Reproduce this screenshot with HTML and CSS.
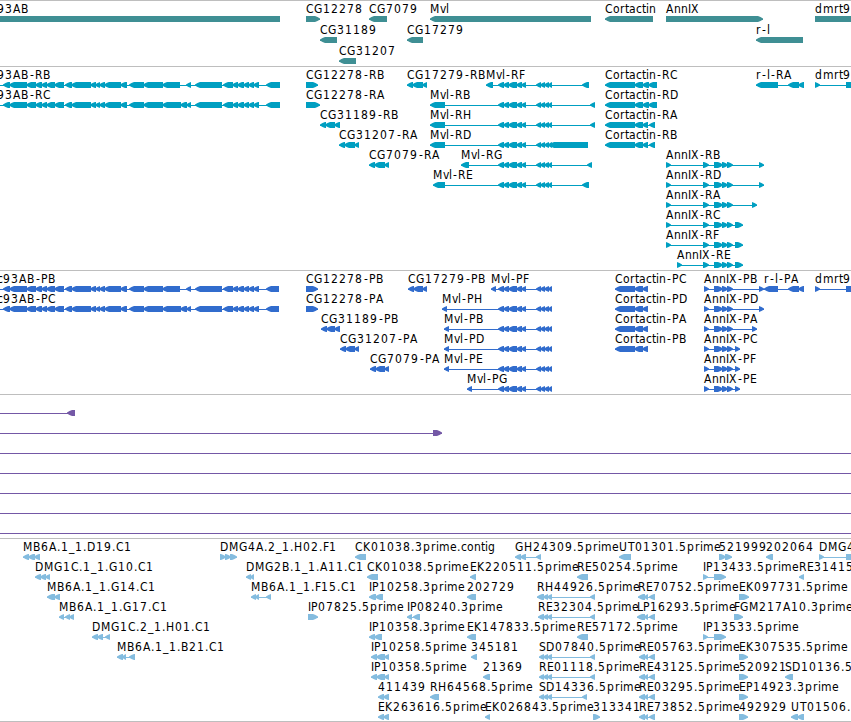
FILE: index.html
```html
<!DOCTYPE html>
<html lang="en">
<head>
    <meta charset="UTF-8">
    <meta name="viewport" content="width=device-width, initial-scale=1.0">
    <title>Genome tracks</title>
    <link rel="stylesheet" href="styles.css">
</head>
<body>
    <div class="browser">
        <svg class="track genes" id="genes"></svg>
        <svg class="track transcripts" id="transcripts"></svg>
        <svg class="track proteins" id="proteins"></svg>
        <svg class="track insertions" id="insertions"></svg>
        <svg class="track cdna" id="cdna"></svg>
    </div>
    <script src="tracks.js"></script>
</body>
</html>
```

FILE: styles.css
```css
body {
    margin: 0;
    background: #fff;
    overflow: hidden;
}

.browser {
    display: flex;
    flex-direction: column;
    width: 851px;
    height: 722px;
}

.track {
    display: block;
    box-sizing: border-box;
    width: 100%;
    border-top: 1px solid #bebebe;
    overflow: hidden;
}

.track text {
    font-family: "DejaVu Sans Condensed", "DejaVu Sans", sans-serif;
    font-size: 12px;
    fill: #000;
}

.genes {
    height: 66px;
    fill: #3f8f94;
}

.transcripts {
    height: 204px;
    fill: #009fc1;
}

.proteins {
    height: 124px;
    fill: #316ccd;
}

.insertions {
    height: 144px;
    fill: #7458a6;
}

.cdna {
    height: 184px;
    fill: #84bcdf;
    border-bottom: 1px solid #bebebe;
}
```

FILE: tracks.js
```js
const NS = 'http://www.w3.org/2000/svg';

// glyph advances in px, digits are 8
const ADV = {
    C: 8, G: 9, K: 8, E: 7, R: 8, H: 9, U: 9, T: 7, S: 7, D: 9, L: 6, P: 7, F: 6,
    M: 10, B: 8, A: 8, I: 3, X: 8, '.': 4, '-': 6, _: 6,
    p: 8, r: 5, i: 3, m: 11, e: 7, c: 6, o: 7, n: 7, t: 4, g: 8, a: 7, v: 6, l: 3, d: 8
};

function add(svg, tag, attrs) {
    const el = document.createElementNS(NS, tag);
    for (const k in attrs) el.setAttribute(k, attrs[k]);
    svg.appendChild(el);
    return el;
}

function label(svg, x, y, name) {
    const xs = [];
    for (const ch of name) {
        // the narrow hyphen sits in the middle of its cell
        xs.push(ch === '-' ? x + 1 : x);
        x += ADV[ch] || 8;
    }
    add(svg, 'text', { x: xs.join(' '), y: y }).textContent = name;
}

function block(svg, a, b, y, dir) {
    const h = Math.min(5, b - a);
    const m = h / 2;
    let pts;
    if (dir === 'L') {
        pts = [[a, y + 3.5], [a, y + 2.5], [a + m, y + 1], [a + h, y], [b, y], [b, y + 6], [a + h, y + 6], [a + m, y + 5]];
    } else if (dir === 'R') {
        pts = [[a, y], [b - h, y], [b - m, y + 1], [b, y + 2.5], [b, y + 3.5], [b - m, y + 5], [b - h, y + 6], [a, y + 6]];
    } else {
        pts = [[a, y], [b, y], [b, y + 6], [a, y + 6]];
    }
    add(svg, 'polygon', { points: pts.join(' ') });
}

// feature: [row, name, label x, direction, "start-end start-end ..."]
function draw(id, base, pitch, features) {
    const svg = document.getElementById(id);
    for (const [row, name, lx, dir, parts] of features) {
        const y = base + row * pitch;
        const segs = parts.split(' ').map(s => s.split('-').map(Number));
        const first = segs[0][0];
        const last = segs[segs.length - 1][1];
        add(svg, 'rect', { x: first, y: y + 3, width: last - first, height: 1 });
        segs.forEach(([a, b], i) => {
            if (b <= a) return;
            // touching exons overlap by a pixel
            const next = segs[i + 1];
            const prev = segs[i - 1];
            if (dir === 'L' && next && next[0] === b) b += 1;
            if (dir === 'R' && prev && prev[1] === a) a -= 1;
            block(svg, a, b, y, dir);
        });
        label(svg, lx, y - 3, name);
    }
}

draw('genes', 15, 21, [
    [0, '93AB', -3, '-', '0-280'],
    [0, 'CG12278', 306, 'R', '306-320'],
    [0, 'CG7079', 369, 'L', '369-387'],
    [0, 'Mvl', 430, 'L', '430-591'],
    [0, 'Cortactin', 605, 'L', '605-653'],
    [0, 'AnnIX', 666, 'R', '666-763'],
    [0, 'dmrt9', 815, 'R', '815-870'],
    [1, 'CG31189', 320, 'L', '320-337'],
    [1, 'CG17279', 407, 'L', '407-423'],
    [1, 'r-l', 756, 'L', '756-803'],
    [2, 'CG31207', 339, 'L', '339-356']
]);

const left = '0-0 3-9 9-26 26-35 35-41 41-46 46-54 54-64 65-71 71-90 90-95 95-99 99-104 104-120 120-127 129-143 143-162 162-180 ';
const right = '186-191 195-222 223-232 232-237 237-243 243-248 248-253 253-259 266-';
const mvl = ' 498-503 503-508 508-516 516-521 521-526 536-540 540-544 544-548 548-552';
const ann = ' 714-723 723-728 727-733 ';

draw('transcripts', 15, 20, [
    [0, '93AB-RB', -3, 'L', left + right + '280'],
    [1, '93AB-RC', -3, 'L', left + '180-186 ' + right + '280'],
    [0, 'CG12278-RB', 306, 'R', '306-318'],
    [1, 'CG12278-RA', 306, 'R', '306-320'],
    [2, 'CG31189-RB', 320, 'L', '320-325 325-334 334-340'],
    [3, 'CG31207-RA', 339, 'L', '339-344 344-354 354-359'],
    [4, 'CG7079-RA', 369, 'L', '369-374 374-384 384-389'],
    [0, 'CG17279-RB', 407, 'L', '407-412 412-422 422-427'],
    [0, 'Mvl-RF', 486, 'L', '486-493' + mvl + ' 582-589'],
    [1, 'Mvl-RB', 430, 'L', '430-445' + mvl + ' 590-595'],
    [2, 'Mvl-RH', 430, 'L', '430-445' + mvl + ' 590-595'],
    [3, 'Mvl-RD', 430, 'L', '430-445' + mvl + ' 549-588'],
    [4, 'Mvl-RG', 461, 'L', '461-469' + mvl + ' 587-592'],
    [5, 'Mvl-RE', 433, 'L', '433-445' + mvl + ' 582-589'],
    [0, 'Cortactin-RC', 605, 'L', '605-634 634-642 642-648 648-657'],
    [1, 'Cortactin-RD', 605, 'L', '605-634 634-642 642-648 648-657'],
    [2, 'Cortactin-RA', 605, 'L', '605-634 634-642 642-648 649-655'],
    [3, 'Cortactin-RB', 605, 'L', '605-634 634-642 642-648 649-655'],
    [4, 'AnnIX-RB', 666, 'R', '666-671 703-709' + ann + '759-764'],
    [5, 'AnnIX-RD', 666, 'R', '666-671 703-709' + ann + '759-764'],
    [6, 'AnnIX-RA', 666, 'R', '666-671 703-709' + ann + '752-757'],
    [7, 'AnnIX-RC', 666, 'R', '666-671 703-709' + ann + '735-743'],
    [8, 'AnnIX-RF', 666, 'R', '666-671 703-709' + ann + '735-743'],
    [9, 'AnnIX-RE', 677, 'R', '677-682 703-709' + ann + '735-743'],
    [0, 'r-l-RA', 756, 'L', '756-778 788-798 798-804'],
    [0, 'dmrt9', 815, 'R', '815-820 846-860']
]);

draw('proteins', 15, 20, [
    [0, 'c93AB-PB', -3, 'L', left + right + '279'],
    [1, 'c93AB-PC', -3, 'L', left + '180-186 ' + right + '279'],
    [0, 'CG12278-PB', 306, 'R', '306-318'],
    [1, 'CG12278-PA', 306, 'R', '306-318'],
    [2, 'CG31189-PB', 321, 'L', '321-326 326-334 334-340'],
    [3, 'CG31207-PA', 340, 'L', '340-345 345-354 354-359'],
    [4, 'CG7079-PA', 370, 'L', '370-375 375-384 384-389'],
    [0, 'CG17279-PB', 408, 'L', '408-413 413-422 422-427'],
    [0, 'Mvl-PF', 491, 'L', '491-496' + mvl],
    [1, 'Mvl-PH', 442, 'L', '442-447' + mvl],
    [2, 'Mvl-PB', 444, 'L', '444-449' + mvl],
    [3, 'Mvl-PD', 444, 'L', '444-449' + mvl],
    [4, 'Mvl-PE', 444, 'L', '444-449' + mvl],
    [5, 'Mvl-PG', 467, 'L', '467-472' + mvl],
    [0, 'Cortactin-PC', 615, 'L', '615-634 634-642 642-648'],
    [1, 'Cortactin-PD', 615, 'L', '615-634 634-642 642-648'],
    [2, 'Cortactin-PA', 615, 'L', '615-634 634-642 642-648'],
    [3, 'Cortactin-PB', 615, 'L', '615-634 634-642 642-648'],
    [0, 'AnnIX-PB', 704, 'R', '704-709' + ann + '759-764'],
    [1, 'AnnIX-PD', 704, 'R', '704-709' + ann + '759-764'],
    [2, 'AnnIX-PA', 704, 'R', '704-709' + ann + '752-757'],
    [3, 'AnnIX-PC', 704, 'R', '704-709' + ann + '735-740'],
    [4, 'AnnIX-PF', 704, 'R', '704-709' + ann + '735-740'],
    [5, 'AnnIX-PE', 704, 'R', '704-709' + ann + '735-740'],
    [0, 'r-l-PA', 764, 'L', '764-778 788-798 798-804'],
    [0, 'dmrt9', 815, 'R', '815-820 846-860']
]);

draw('insertions', 15, 20, [
    [0, '', 0, 'L', '0-0 67-75'],
    [1, '', 0, 'R', '0-0 433-442']
]);
for (let row = 2; row < 7; row++) {
    add(document.getElementById('insertions'), 'rect',
        { x: 0, y: 18 + row * 20, width: 851, height: 1 });
}

const est = '-543 543-547 547-552 590-595';
const re = '-644 644-648 649-655';

draw('cdna', 15, 20, [
    [0, 'MB6A.1_1.D19.C1', 23, 'L', '23-28 28-34 34-40'],
    [0, 'DMG4A.2_1.H02.F1', 220, 'R', '220-226 226-231 231-237'],
    [0, 'CK01038.3prime.contig', 355, 'L', '355-366'],
    [0, 'GH24309.5prime', 515, 'L', '515-520 520-526 536-541'],
    [0, 'UT01301.5prime', 619, 'L', '619-631'],
    [0, '521999', 719, 'R', '719-726 726-732'],
    [0, '202064', 766, 'L', '766-773'],
    [0, 'DMG4', 819, 'R', '819-824 846-860'],
    [1, 'DMG1C.1_1.G10.C1', 35, 'L', '35-40 40-45 45-50'],
    [1, 'DMG2B.1_1.A11.C1', 246, 'L', '246-250 250-254'],
    [1, 'CK01038.5prime', 367, 'L', '367-378'],
    [1, 'EK220511.5prime', 470, 'L', '470-476'],
    [1, 'RE50254.5prime', 577, 'L', '577-588'],
    [1, 'IP13433.5prime', 703, 'R', '703-708 714-726'],
    [1, 'RE31415', 799, 'L', '799-804'],
    [2, 'MB6A.1_1.G14.C1', 47, 'L', '47-54 54-60'],
    [2, 'MB6A.1_1.F15.C1', 251, 'L', '251-255 255-259 266-271'],
    [2, 'IP10258.3prime', 369, 'L', '369-375 375-383'],
    [2, '202729', 467, 'L', '467-476'],
    [2, 'RH44926.5prime', 537, 'L', '537' + est],
    [2, 'RE70752.5prime', 638, 'L', '638' + re],
    [2, 'EK097731.5prime', 739, 'R', '739-749'],
    [3, 'MB6A.1_1.G17.C1', 59, 'L', '59-64 65-69 69-74'],
    [3, 'IP07825.5prime', 308, 'R', '308-318'],
    [3, 'IP08240.3prime', 407, 'L', '407-412 413-420'],
    [3, 'RE32304.5prime', 538, 'L', '538' + est],
    [3, 'LP16293.5prime', 637, 'L', '637' + re],
    [3, 'FGM217A10.3prime', 734, 'R', '734-743'],
    [4, 'DMG1C.2_1.H01.C1', 92, 'L', '92-97 97-103 105-110'],
    [4, 'IP10358.3prime', 369, 'L', '369-374 374-382'],
    [4, 'EK147833.5prime', 467, 'L', '467-476'],
    [4, 'RE57172.5prime', 577, 'L', '577-588'],
    [4, 'IP13533.5prime', 703, 'R', '703-708 714-726'],
    [5, 'MB6A.1_1.B21.C1', 117, 'L', '117-122 122-126 129-135'],
    [5, 'IP10258.5prime', 371, 'L', '371-376 376-384 384-389'],
    [5, '345181', 471, 'L', '471-477'],
    [5, 'SD07840.5prime', 539, 'L', '539' + est],
    [5, 'RE05763.5prime', 639, 'L', '639' + re],
    [5, 'EK307535.5prime', 739, 'R', '739-748'],
    [6, 'IP10358.5prime', 371, 'L', '371-376 376-384 384-389'],
    [6, '21369', 483, 'L', '483-490'],
    [6, 'RE01118.5prime', 539, 'L', '539' + est],
    [6, 'RE43125.5prime', 639, 'L', '639' + re],
    [6, '520921', 739, 'R', '739-748'],
    [6, 'SD10136.5', 785, 'L', '785-793'],
    [7, '411439', 378, 'L', '378-383 383-389'],
    [7, 'RH64568.5prime', 430, 'L', '430-439'],
    [7, 'SD14336.5prime', 539, 'L', '539-543 543-547 547-552 582-587'],
    [7, 'RE03295.5prime', 639, 'L', '639' + re],
    [7, 'EP14923.3prime', 739, 'R', '739-748'],
    [8, 'EK263616.5prime', 378, 'L', '378-383 383-389'],
    [8, 'EK026843.5prime', 485, 'L', '485-490'],
    [8, '313341', 593, 'R', '593-600'],
    [8, 'RE73852.5prime', 639, 'L', '639' + re],
    [8, '492929', 739, 'R', '739-748'],
    [8, 'UT01506.', 791, 'L', '791-797 797-804']
]);
```
